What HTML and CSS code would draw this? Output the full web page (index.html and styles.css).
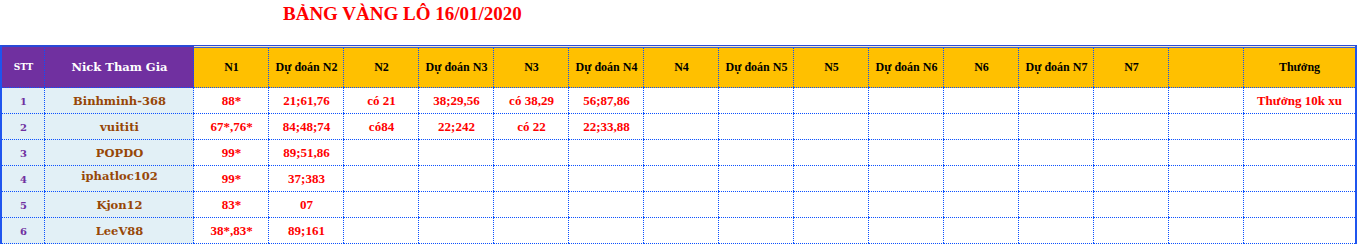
FILE: index.html
```html
<!DOCTYPE html>
<html lang="vi">
<head>
<meta charset="utf-8">
<title>Bảng vàng lô 16/01/2020</title>
<link rel="stylesheet" href="styles.css">
</head>
<body>
<div class="title">BẢNG VÀNG LÔ 16/01/2020</div>
<div class="sheet">
  <div class="c hp stt">STT</div>
  <div class="c hp nickh">Nick Tham Gia</div>
  <div class="c hy">N1</div>
  <div class="c hy">Dự đoán N2</div>
  <div class="c hy">N2</div>
  <div class="c hy">Dự đoán N3</div>
  <div class="c hy">N3</div>
  <div class="c hy">Dự đoán N4</div>
  <div class="c hy">N4</div>
  <div class="c hy">Dự đoán N5</div>
  <div class="c hy">N5</div>
  <div class="c hy">Dự đoán N6</div>
  <div class="c hy">N6</div>
  <div class="c hy">Dự đoán N7</div>
  <div class="c hy">N7</div>
  <div class="c hy"></div>
  <div class="c hy last">Thưởng</div>

  <div class="c num">1</div><div class="c nick">Binhminh-368</div>
  <div class="c d">88*</div><div class="c d">21;61,76</div><div class="c d">có 21</div><div class="c d">38;29,56</div><div class="c d">có 38,29</div><div class="c d">56;87,86</div>
  <div class="c d"></div><div class="c d"></div><div class="c d"></div><div class="c d"></div><div class="c d"></div><div class="c d"></div><div class="c d"></div><div class="c d"></div>
  <div class="c d last">Thưởng 10k xu</div>

  <div class="c num">2</div><div class="c nick">vuititi</div>
  <div class="c d">67*,76*</div><div class="c d">84;48;74</div><div class="c d">có84</div><div class="c d">22;242</div><div class="c d">có 22</div><div class="c d">22;33,88</div>
  <div class="c d"></div><div class="c d"></div><div class="c d"></div><div class="c d"></div><div class="c d"></div><div class="c d"></div><div class="c d"></div><div class="c d"></div>
  <div class="c d last"></div>

  <div class="c num">3</div><div class="c nick">POPDO</div>
  <div class="c d">99*</div><div class="c d">89;51,86</div><div class="c d"></div><div class="c d"></div><div class="c d"></div><div class="c d"></div>
  <div class="c d"></div><div class="c d"></div><div class="c d"></div><div class="c d"></div><div class="c d"></div><div class="c d"></div><div class="c d"></div><div class="c d"></div>
  <div class="c d last"></div>

  <div class="c num">4</div><div class="c nick raised">iphatloc102</div>
  <div class="c d">99*</div><div class="c d">37;383</div><div class="c d"></div><div class="c d"></div><div class="c d"></div><div class="c d"></div>
  <div class="c d"></div><div class="c d"></div><div class="c d"></div><div class="c d"></div><div class="c d"></div><div class="c d"></div><div class="c d"></div><div class="c d"></div>
  <div class="c d last"></div>

  <div class="c num">5</div><div class="c nick">Kjon12</div>
  <div class="c d">83*</div><div class="c d">07</div><div class="c d"></div><div class="c d"></div><div class="c d"></div><div class="c d"></div>
  <div class="c d"></div><div class="c d"></div><div class="c d"></div><div class="c d"></div><div class="c d"></div><div class="c d"></div><div class="c d"></div><div class="c d"></div>
  <div class="c d last"></div>

  <div class="c num">6</div><div class="c nick">LeeV88</div>
  <div class="c d">38*,83*</div><div class="c d">89;161</div><div class="c d"></div><div class="c d"></div><div class="c d"></div><div class="c d"></div>
  <div class="c d"></div><div class="c d"></div><div class="c d"></div><div class="c d"></div><div class="c d"></div><div class="c d"></div><div class="c d"></div><div class="c d"></div>
  <div class="c d last"></div>
</div>
</body>
</html>
```
FILE: styles.css
```css
html, body {
  margin: 0;
  padding: 0;
  background: #ffffff;
}

.title {
  height: 42px;
  padding: 3px 0 0 283px;
  font-family: "Liberation Serif", "Times New Roman", serif;
  font-weight: bold;
  font-size: 19px;
  line-height: 22px;
  color: #ff0000;
  white-space: nowrap;
}

.sheet {
  width: 1353px;
  display: grid;
  grid-template-columns: 43px 149px repeat(14, 75px) 111px;
  grid-template-rows: 42px repeat(6, 26px);
  border-left: 2px solid #1f55ee;
  border-right: 2px solid #1f55ee;
  border-top: 1px solid #2a4ad8;
}

/* dotted Excel-style gridlines: 1px on / 1px off on the right and bottom edge */
.c {
  box-sizing: border-box;
  display: flex;
  align-items: center;
  justify-content: center;
  white-space: nowrap;
  overflow: hidden;
  background-image:
    linear-gradient(to bottom, #0a50ff 50%, transparent 50%),
    linear-gradient(to right, #0a50ff 50%, transparent 50%);
  background-size: 1px 2px, 2px 1px;
  background-repeat: repeat-y, repeat-x;
  background-position: right top, left bottom;
}

.c.last {
  background-image: linear-gradient(to right, #0a50ff 50%, transparent 50%);
  background-size: 2px 1px;
  background-repeat: repeat-x;
  background-position: left bottom;
}

.hp {
  background-color: #7030a0;
  color: #ffffff;
  font-family: "DejaVu Serif", Cambria, serif;
  font-weight: bold;
  box-shadow: inset 0 1px 0 #2a4ad8;
}

.stt {
  font-size: 9px;
}

.nickh {
  font-size: 11.5px;
}

.hy {
  background-color: #ffc000;
  color: #000000;
  font-family: "Liberation Serif", "Times New Roman", serif;
  font-weight: bold;
  font-size: 12px;
  box-shadow: inset 0 1px 0 #f3e6c0, inset 0 2px 0 #3a62d8;
}

.num {
  background-color: #e2f0f6;
  color: #7030a0;
  font-family: "DejaVu Serif", Cambria, serif;
  font-weight: bold;
  font-size: 10px;
}

.nick {
  background-color: #e2f0f6;
  color: #974706;
  font-family: "DejaVu Serif", Cambria, serif;
  font-weight: bold;
  font-size: 11.5px;
}

.nick.raised {
  padding-bottom: 7px;
}

.d {
  background-color: #ffffff;
  color: #ff0000;
  font-family: "Liberation Serif", "Times New Roman", serif;
  font-weight: bold;
  font-size: 13px;
}
```
